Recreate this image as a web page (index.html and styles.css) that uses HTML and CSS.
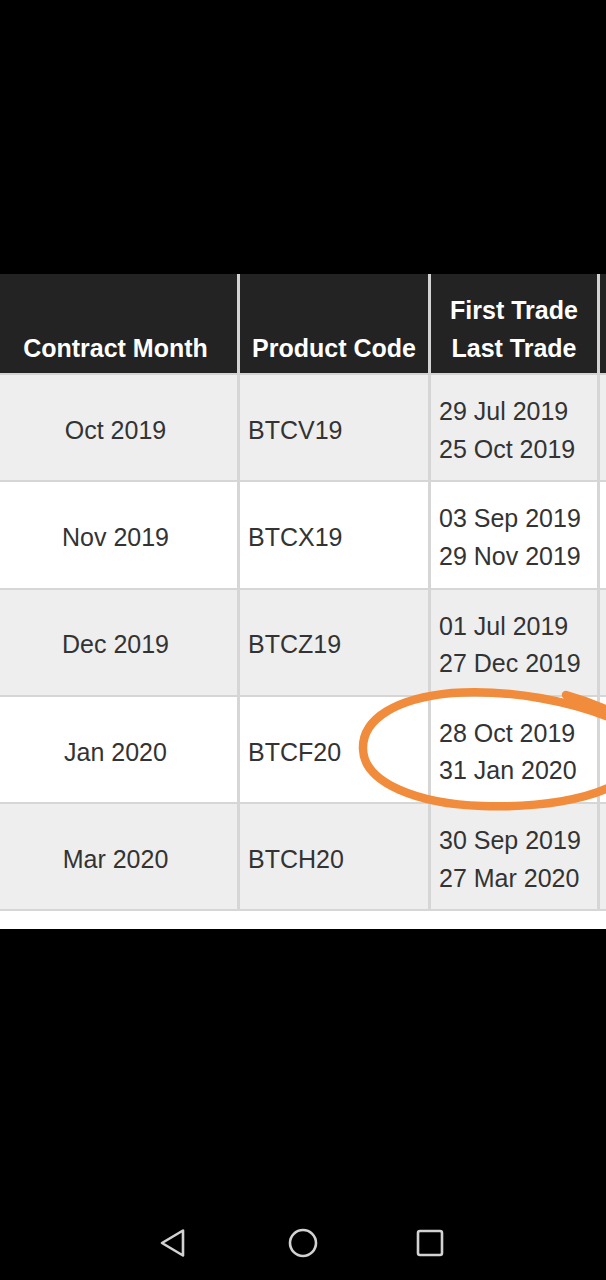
FILE: index.html
```html
<!DOCTYPE html>
<html lang="en">
<head>
<meta charset="utf-8">
<title>Bitcoin futures contracts</title>
<link rel="stylesheet" href="styles.css">
</head>
<body>
<div class="screen">
  <div class="top-gap"></div>
  <div class="sheet">
    <div class="scroller">
      <table class="contracts">
        <thead>
          <tr>
            <th class="c-month">Contract Month</th>
            <th class="c-code">Product Code</th>
            <th class="c-dates">First Trade<br>Last Trade</th>
            <th class="c-more"></th>
          </tr>
        </thead>
        <tbody>
          <tr class="shade">
            <td class="c-month">Oct 2019</td>
            <td class="c-code">BTCV19</td>
            <td class="c-dates">29 Jul 2019<br>25 Oct 2019</td>
            <td class="c-more"></td>
          </tr>
          <tr>
            <td class="c-month">Nov 2019</td>
            <td class="c-code">BTCX19</td>
            <td class="c-dates">03 Sep 2019<br>29 Nov 2019</td>
            <td class="c-more"></td>
          </tr>
          <tr class="shade">
            <td class="c-month">Dec 2019</td>
            <td class="c-code">BTCZ19</td>
            <td class="c-dates">01 Jul 2019<br>27 Dec 2019</td>
            <td class="c-more"></td>
          </tr>
          <tr>
            <td class="c-month">Jan 2020</td>
            <td class="c-code">BTCF20</td>
            <td class="c-dates">28 Oct 2019<br>31 Jan 2020</td>
            <td class="c-more"></td>
          </tr>
          <tr class="shade">
            <td class="c-month">Mar 2020</td>
            <td class="c-code">BTCH20</td>
            <td class="c-dates">30 Sep 2019<br>27 Mar 2020</td>
            <td class="c-more"></td>
          </tr>
        </tbody>
      </table>
    </div>
  </div>
  <nav class="navbar">
    <svg class="nav-icon nav-back" width="30" height="32" viewBox="0 0 30 32" aria-label="Back">
      <path d="M4 16 L25 3.5 L25 28.5 Z" fill="none" stroke="#d2d2d2" stroke-width="2.6" stroke-linejoin="round"/>
    </svg>
    <svg class="nav-icon nav-home" width="32" height="32" viewBox="0 0 32 32" aria-label="Home">
      <circle cx="16" cy="16" r="13" fill="none" stroke="#d2d2d2" stroke-width="2.6"/>
    </svg>
    <svg class="nav-icon nav-recents" width="30" height="30" viewBox="0 0 30 30" aria-label="Recents">
      <rect x="3" y="3" width="24" height="24" rx="2" fill="none" stroke="#d2d2d2" stroke-width="2.6"/>
    </svg>
  </nav>
  <svg class="scribble" width="606" height="1280" viewBox="0 0 606 1280" aria-hidden="true">
    <path d="M566 695 C584 700 600 706 616 714 L616 784 C590 799 540 808 482 806 C420 804 364 784 363 749 C362 718 398 698 452 693 C512 689 575 702 616 720" fill="none" stroke="#f08c3c" stroke-width="8.5" stroke-linecap="round" stroke-linejoin="round"/>
  </svg>
</div>
</body>
</html>
```

FILE: styles.css
```css
* {
  box-sizing: border-box;
}

html, body {
  margin: 0;
  padding: 0;
  background: #000;
}

.screen {
  position: relative;
  width: 606px;
  height: 1280px;
  display: flex;
  flex-direction: column;
  overflow: hidden;
  font-family: "Liberation Sans", Arial, sans-serif;
}

.top-gap {
  height: 274px;
  flex: none;
}

.sheet {
  background: #fff;
  padding-bottom: 18px;
  flex: none;
}

.scroller {
  overflow: hidden;
}

.contracts {
  border-collapse: separate;
  border-spacing: 0;
  table-layout: fixed;
  margin-left: -6px;
  width: 700px;
  font-size: 25px;
  line-height: 37.5px;
}

.contracts th {
  background: #232323;
  color: #fff;
  font-weight: bold;
  text-align: center;
  vertical-align: bottom;
  height: 101px;
  padding: 0 0 6px;
  border-right: 3px solid #d3d3d3;
  border-bottom: 2px solid #d3d3d3;
  white-space: nowrap;
}

.contracts td {
  color: #333;
  vertical-align: middle;
  padding: 18px 8px 12.25px;
  border-right: 3px solid #d6d6d6;
  border-bottom: 2px solid #d6d6d6;
  background: #fff;
  white-space: nowrap;
}

.contracts tr.shade td {
  background: #eeeeee;
}

.c-month {
  width: 246px;
}

.c-code {
  width: 191px;
}

.c-dates {
  width: 169px;
}

.c-more {
  width: 94px;
}

.contracts td.c-month {
  text-align: center;
  padding-right: 0;
  padding-left: 0;
}

.contracts td.c-code,
.contracts td.c-dates {
  text-align: left;
}

.navbar {
  margin-top: auto;
  height: 74px;
  padding-left: 158px;
  display: flex;
  align-items: center;
  justify-content: flex-start;
  flex: none;
}

.nav-icon {
  display: block;
  flex: none;
}

.nav-back {
  margin-right: 99px;
}

.nav-recents {
  margin-left: 96px;
}

.scribble {
  position: absolute;
  left: 0;
  top: 0;
  pointer-events: none;
}
```
